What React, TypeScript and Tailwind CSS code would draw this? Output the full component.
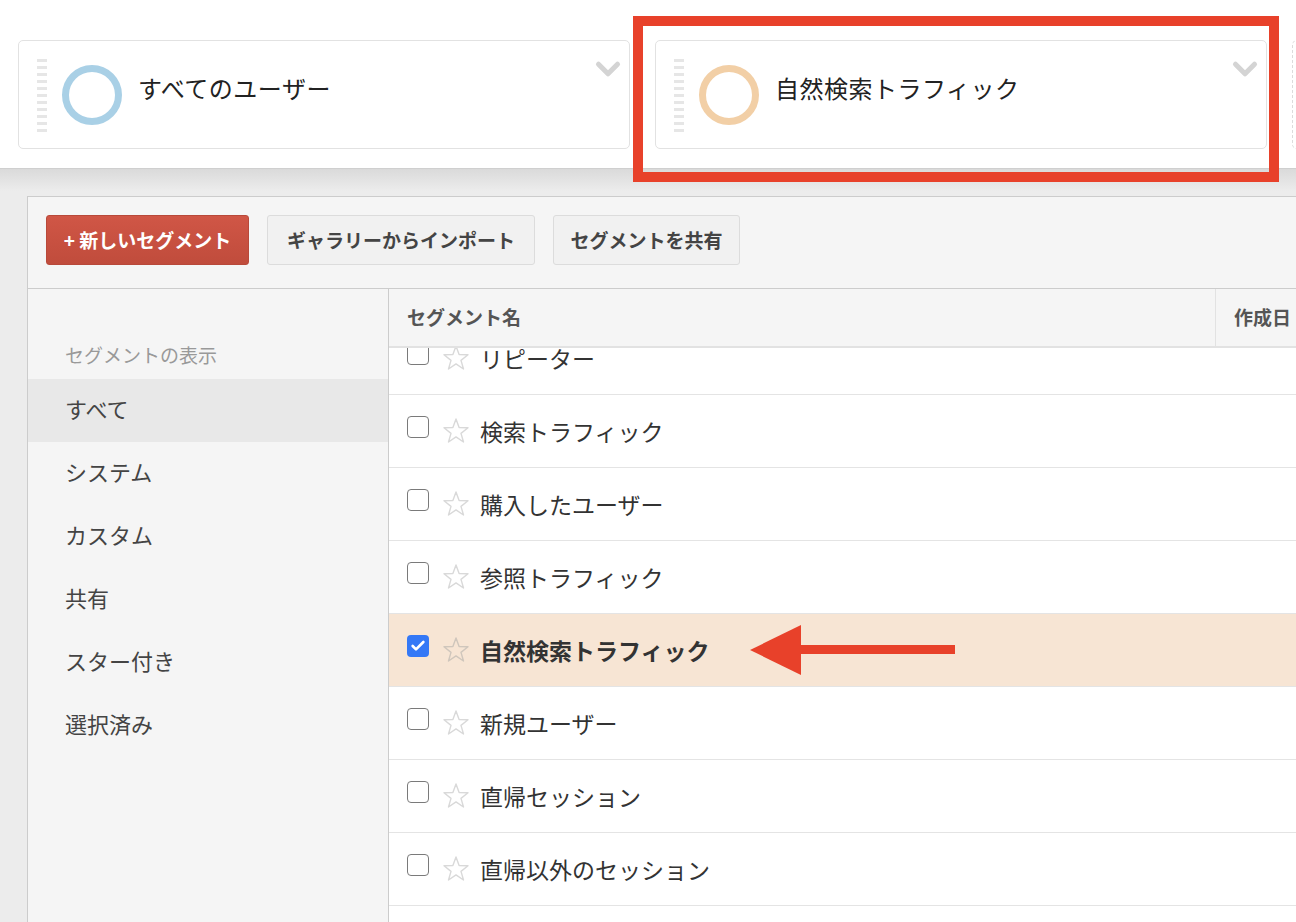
import { ChevronDown, Check } from "lucide-react";

const font = { fontFamily: '"Noto Sans CJK JP", "Noto Sans", sans-serif' };

const sideItems = ["すべて", "システム", "カスタム", "共有", "スター付き", "選択済み"];

const rows = [
  { name: "リピーター" },
  { name: "検索トラフィック" },
  { name: "購入したユーザー" },
  { name: "参照トラフィック" },
  { name: "自然検索トラフィック", checked: true },
  { name: "新規ユーザー" },
  { name: "直帰セッション" },
  { name: "直帰以外のセッション" },
];

function StarIcon({ color }: { color: string }) {
  return (
    <svg width="28" height="28" viewBox="0 0 28 28" className="shrink-0">
      <polygon
        points="14,2 17.1,10.6 26,10.8 19,16.4 21.5,25 14,19.9 6.5,25 9,16.4 2,10.8 10.9,10.6"
        fill="none"
        stroke={color}
        strokeWidth="1.4"
        strokeLinejoin="round"
      />
    </svg>
  );
}

function SegmentCard({ label, ring }: { label: string; ring: string }) {
  return (
    <div className="w-[612px] h-[109px] shrink-0 bg-white border border-[#e2e2e2] rounded-[5px] flex items-start">
      {/* drag handle */}
      <div className="ml-[18px] mt-[18px] flex flex-col gap-[4px]">
        {Array.from({ length: 11 }).map((_, i) => (
          <div key={i} className="w-[10px] h-[3px] bg-[#e6e6e6]" />
        ))}
      </div>
      <div className={`ml-[15px] mt-[24px] w-[60px] h-[60px] rounded-full border-[7px] ${ring}`} />
      <div className="ml-[16px] mt-[31px] text-[24px] leading-[32px] tracking-[0.5px] text-[#222]">{label}</div>
      <ChevronDown className="ml-auto mr-[2px] mt-[9px] text-[#d4d4d4]" size={38} strokeWidth={3.2} />
    </div>
  );
}

export default function App() {
  return (
    <div className="relative w-[1296px] h-[922px] overflow-hidden bg-[#ececec]" style={font}>
      {/* Segment cards header */}
      <div className="h-[169px] bg-white border-b border-[#cfcfcf] flex gap-[25px] pl-[18px] pt-[40px]">
        <SegmentCard label="すべてのユーザー" ring="border-[#a9d0e6]" />
        <SegmentCard label="自然検索トラフィック" ring="border-[#f2cfa6]" />
        <div className="w-[612px] h-[109px] shrink-0 border border-dashed border-[#dcdcdc] rounded-[5px]" />
      </div>

      {/* Main area */}
      <div className="bg-[linear-gradient(#dadada,#ececec_22px)] pl-[27px] pt-[27px] h-[753px]">
        <div className="w-[1300px] h-[760px] bg-[#f5f5f5] border border-[#cccccc] flex flex-col">
          {/* Toolbar */}
          <div className="h-[92px] shrink-0 border-b border-[#cccccc] flex items-start gap-[18px] pl-[18px] pt-[18px]">
            <button className="w-[203px] h-[50px] rounded-[3px] border border-[#b8493a] bg-[linear-gradient(#d05646,#c04c3c)] text-white font-bold text-[19px]">
              + 新しいセグメント
            </button>
            <button className="w-[268px] h-[50px] rounded-[3px] border border-[#dcdcdc] bg-[#f1f1f1] text-[#444] font-bold text-[19px]">
              ギャラリーからインポート
            </button>
            <button className="w-[187px] h-[50px] rounded-[3px] border border-[#dcdcdc] bg-[#f1f1f1] text-[#444] font-bold text-[19px]">
              セグメントを共有
            </button>
          </div>

          <div className="flex flex-1">
            {/* Sidebar */}
            <div className="w-[360px] shrink-0 pt-[52px]">
              <div className="pl-[37px] h-[28px] leading-[28px] text-[19px] text-[#999] mb-[10px]">セグメントの表示</div>
              {sideItems.map((item, i) => (
                <div
                  key={item}
                  className={`h-[63px] pl-[37px] pb-[5px] flex items-center text-[22px] text-[#444] ${i === 0 ? "bg-[#e8e8e8]" : ""}`}
                >
                  {item}
                </div>
              ))}
            </div>

            {/* Table */}
            <div className="flex-1 bg-white border-l border-[#cccccc] flex flex-col">
              <div className="h-[59px] shrink-0 bg-[#f5f5f5] border-b-2 border-[#e2e2e2] flex font-bold text-[19px] text-[#555]">
                <div className="w-[827px] pl-[18px] flex items-center border-r border-[#e2e2e2]">セグメント名</div>
                <div className="pl-[18px] flex items-center">作成日</div>
              </div>
              <div className="flex-1 overflow-hidden">
                <div className="mt-[-26px]">
                  {rows.map((r) => (
                    <div
                      key={r.name}
                      className={`h-[73px] border-b border-[#e4e4e4] flex items-center pl-[18px] ${r.checked ? "bg-[#f7e5d4]" : ""}`}
                    >
                      {r.checked ? (
                        <div className="w-[22px] h-[22px] mb-[9px] rounded-[4px] bg-[#3478f6] flex items-center justify-center">
                          <Check size={16} strokeWidth={4} className="text-white" />
                        </div>
                      ) : (
                        <div className="w-[22px] h-[22px] mb-[9px] rounded-[4px] border-[1.5px] border-[#7a7a7a] bg-white" />
                      )}
                      <div className="ml-[13px]">
                        <StarIcon color={r.checked ? "#cfc6bc" : "#d9d9d9"} />
                      </div>
                      <div
                        className={`ml-[10px] text-[23px] text-[#333] ${r.checked ? "font-bold" : ""}`}
                      >
                        {r.name}
                      </div>
                    </div>
                  ))}
                </div>
              </div>
            </div>
          </div>
        </div>
      </div>

      {/* Annotation: red box */}
      <div className="absolute left-[633px] top-[16px] w-[646px] h-[166px] border-[10px] border-[#e8412a]" />

      {/* Annotation: arrow */}
      <svg className="absolute left-[745px] top-[620px]" width="215" height="60" viewBox="0 0 215 60">
        <polygon points="5,30 56,5 56,55" fill="#e8412a" />
        <rect x="54" y="25" width="156" height="9" fill="#e8412a" />
      </svg>
    </div>
  );
}
